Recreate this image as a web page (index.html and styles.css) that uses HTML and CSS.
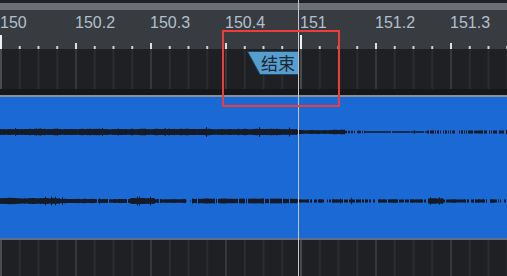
FILE: index.html
```html
<!DOCTYPE html>
<html lang="zh">
<head>
<meta charset="utf-8">
<title>Timeline</title>
<link rel="stylesheet" href="styles.css">
</head>
<body>
<div class="app">
  <div class="topbar"></div>
  <div class="ruler">
    <div class="labels">
      <span>150</span><span>150.2</span><span>150.3</span><span>150.4</span><span>151</span><span>151.2</span><span>151.3</span>
    </div>
    <div class="ticks"></div>
  </div>
  <div class="lane grid"></div>
  <div class="sep"></div>
  <div class="clip">
    <svg id="wave" class="wave" width="507" height="141" viewBox="0 0 507 141"></svg>
  </div>
  <div class="lane-bottom grid"></div>

  <div class="marker">
    <svg class="marker-shape" width="52" height="24" viewBox="0 0 52 24">
      <polygon points="0.5,0.5 51.5,0.5 51.5,23.5 13,23.5" />
    </svg>
    <span class="marker-text">结束</span>
  </div>
  <div class="playhead"></div>
  <div class="highlight"></div>
</div>
<script src="script.js"></script>
</body>
</html>
```

FILE: styles.css
```css
html, body {
  margin: 0;
  padding: 0;
  background: #1f2023;
}

.app {
  position: relative;
  width: 507px;
  height: 276px;
  overflow: hidden;
  display: flex;
  flex-direction: column;
  font-family: "Liberation Sans", Arial, sans-serif;
}

.topbar {
  height: 7px;
  border-top: 3px solid #202124;
  background: #6c6f75;
  flex: none;
}

.ruler {
  height: 39px;
  flex: none;
  box-sizing: border-box;
  padding-top: 5px;
  background: #383b40;
  display: flex;
  flex-direction: column;
  justify-content: space-between;
}

.labels {
  display: flex;
  white-space: nowrap;
}

.labels span {
  flex: none;
  width: 75px;
  font-size: 16px;
  line-height: 16px;
  color: #b1c0cf;
}

.ticks {
  height: 14px;
  background-image:
    linear-gradient(to right, #f0f0f0 0 2px, transparent 2px),
    linear-gradient(to right, #dcdfe2 0 2px, transparent 2px),
    linear-gradient(to right, #cfd2d6 0 2px, transparent 2px);
  background-size: 300px 14px, 75px 6px, 18.75px 3px;
  background-repeat: repeat-x;
  background-position: 0 100%, 0 100%, 0 100%;
}

.grid {
  background-color: #1f2023;
  background-image:
    linear-gradient(to right, #4a4b4f 0 2px, transparent 2px),
    linear-gradient(to right, #36373b 0 2px, transparent 2px),
    linear-gradient(to right, #2b2c2f 0 2px, transparent 2px);
  background-size: 300px 100%, 75px 100%, 18.75px 100%;
  background-repeat: repeat-x;
}

.lane {
  height: 40px;
  flex: none;
}

.sep {
  height: 6px;
  flex: none;
  background: #161719;
}

.clip {
  height: 141px;
  flex: none;
  background: #1b69d4;
  border-top: 2px solid #8b9097;
  border-bottom: 2px solid #5c6d85;
}

.wave {
  display: block;
}

.wave path {
  fill: #151b25;
}

.lane-bottom {
  flex: 1;
}

.marker {
  position: absolute;
  left: 247px;
  top: 51px;
  width: 52px;
  height: 24px;
  display: flex;
  align-items: center;
  padding-left: 14px;
  box-sizing: border-box;
}

.marker-shape {
  position: absolute;
  left: 0;
  top: 0;
}

.marker-shape polygon {
  fill: #559fd0;
  stroke: #25435e;
  stroke-width: 1;
}

.marker-text {
  position: relative;
  font-family: "Noto Sans CJK SC", sans-serif;
  font-size: 17px;
  line-height: 24px;
  color: #1c2631;
}

.playhead {
  position: absolute;
  left: 298px;
  top: 0;
  width: 1px;
  height: 276px;
  background: #c3c6ca;
}

.highlight {
  position: absolute;
  left: 222px;
  top: 30px;
  width: 118px;
  height: 77px;
  box-sizing: border-box;
  border: 2px solid #ef3b3b;
}
```

FILE: script.js
```js
(function () {
  var seed = 24680;
  function rnd() {
    seed |= 0; seed = seed + 0x6D2B79F5 | 0;
    var t = Math.imul(seed ^ seed >>> 15, 1 | seed);
    t = t + Math.imul(t ^ t >>> 7, 61 | t) ^ t;
    return ((t ^ t >>> 14) >>> 0) / 4294967296;
  }

  function topEnv(x) {
    if (x < 297) return { a: 3.0, gap: 0, spike: 0.025 };
    if (x < 345) return { a: 2.0, gap: 0, spike: 0 };
    if (x < 365) return { a: 1.3, gap: 0.3, spike: 0 };
    if (x < 427) return { a: 0.7, gap: 0.03, spike: 0.01 };
    return { a: 1.5, gap: 0.3, spike: 0.02 };
  }

  function botEnv(x) {
    if (x < 60) return { a: 2.8, gap: 0, spike: 0.02 };
    if (x < 130) return { a: 2.0, gap: 0.02, spike: 0.02 };
    if (x < 155) return { a: 2.9, gap: 0, spike: 0.06 };
    if (x < 186) return { a: 1.8, gap: 0.03, spike: 0.02 };
    if (x < 192) return { a: 0.4, gap: 0.6, spike: 0 };
    if (x < 297) return { a: 2.3, gap: 0.08, spike: 0.03 };
    if (x < 427) return { a: 1.6, gap: 0.2, spike: 0.02 };
    if (x < 443) return { a: 2.6, gap: 0.05, spike: 0.06 };
    return { a: 1.6, gap: 0.2, spike: 0.02 };
  }

  function channel(center, env) {
    var d = "";
    var s = 0.5;
    for (var x = 0; x < 507; x++) {
      var e = env(x);
      s = 0.6 * s + 0.4 * rnd();
      if (rnd() < e.gap) continue;
      var a = e.a * (0.8 + 0.4 * s);
      if (rnd() < e.spike) a += 0.8 + 1.2 * rnd();
      var y1 = center - a;
      var h = 2 * a;
      d += "M" + x + "," + y1.toFixed(2) + "h1v" + h.toFixed(2) + "h-1z";
    }
    return d;
  }

  var svg = document.getElementById("wave");
  var ns = "http://www.w3.org/2000/svg";
  [[35, topEnv], [104, botEnv]].forEach(function (c) {
    var p = document.createElementNS(ns, "path");
    p.setAttribute("d", channel(c[0], c[1]));
    svg.appendChild(p);
  });
})();
```
